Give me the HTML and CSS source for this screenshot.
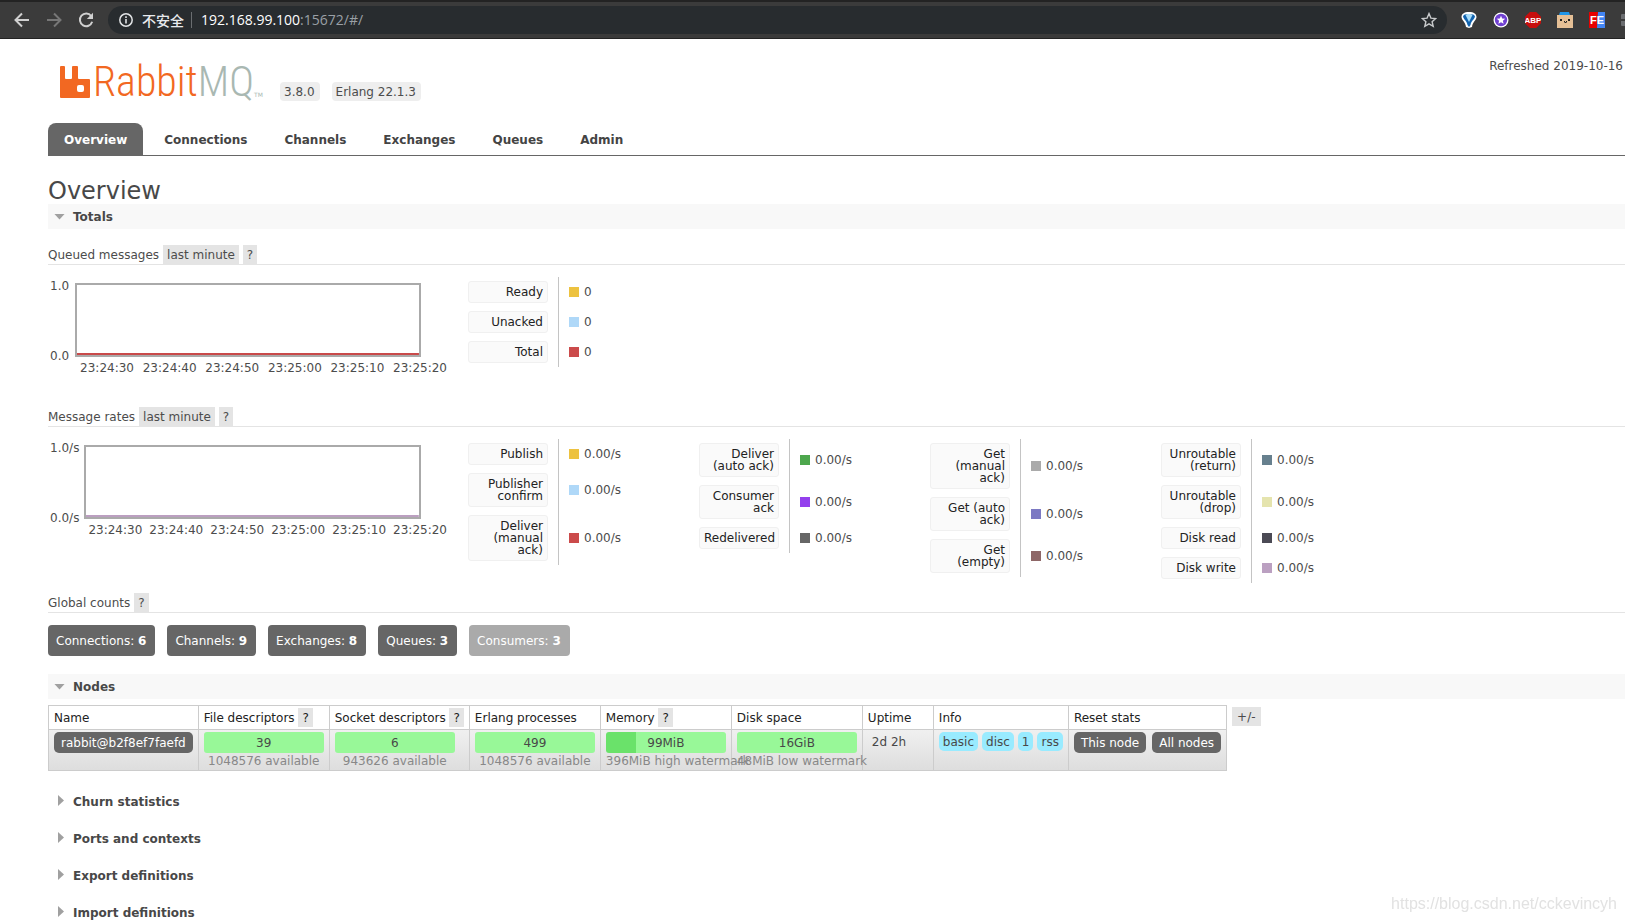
FILE: index.html
```html
<!DOCTYPE html>
<html lang="en">
<head>
<meta charset="utf-8">
<title>RabbitMQ Management</title>
<link rel="stylesheet" href="styles.css">
</head>
<body>
<header class="browser">
  <button class="nav-btn" aria-label="Back"><svg width="16" height="16" viewBox="0 0 16 16"><path d="M15 8H2M8 1.500L1.500 8L8 14.500" fill="none" stroke="#d0d0d0" stroke-width="2"/></svg></button>
  <button class="nav-btn" aria-label="Forward"><svg width="16" height="16" viewBox="0 0 16 16"><path d="M1 8H14M8 1.500L14.500 8L8 14.500" fill="none" stroke="#777" stroke-width="2"/></svg></button>
  <button class="nav-btn" aria-label="Reload"><svg width="16" height="16" viewBox="0 0 16 16"><path d="M13.200 4A6.300 6.300 0 1 0 14.200 9.800" fill="none" stroke="#d0d0d0" stroke-width="2"/><path d="M15 .8V7H8.800Z" fill="#d0d0d0"/></svg></button>
  <div class="address">
    <svg width="14" height="14" viewBox="0 0 14 14"><circle cx="7" cy="7" r="6.200" fill="none" stroke="#e2e4e6" stroke-width="1.500"/><path d="M7 6V10.500M7 3.300V4.900" stroke="#e2e4e6" stroke-width="1.600"/></svg>
    <span class="insecure">不安全</span>
    <span class="url"><b>192.168.99.100</b>:15672/#/</span>
    <button class="nav-btn star" aria-label="Bookmark"><svg width="16" height="16" viewBox="0 0 16 16"><path d="M8 1.600L9.900 6.100L14.700 6.500L11.100 9.700L12.200 14.400L8 11.900L3.800 14.400L4.900 9.700L1.300 6.500L6.100 6.100Z" fill="none" stroke="#c8cacc" stroke-width="1.400"/></svg></button>
  </div>
  <div class="extensions">
    <svg width="16" height="16" viewBox="0 0 16 16"><path d="M8 0C13 0 15.500 2 15.500 5C15.500 8 11.500 10 11 15L8 16L5 15C4.500 10 .5 8 .5 5C.5 2 3 0 8 0Z" fill="#fff"/><path d="M2 4.500C3 2 5 1.500 8 3C11 1.500 13 2 14 4.500C13 8 10 9 9.500 13L8 15L6.500 13C6 9 3 8 2 4.500Z" fill="#1264b0"/><path d="M4.500 3Q8 1 11.500 3L8 10Z" fill="#a8dcf8"/></svg>
    <svg width="16" height="16" viewBox="0 0 16 16"><circle cx="8" cy="8" r="7.500" fill="#fff"/><circle cx="8" cy="8" r="6.200" fill="#7040d0"/><path d="M8 3.800L9.200 6.600L12.200 6.800L9.900 8.800L10.600 11.800L8 10.200L5.400 11.800L6.100 8.800L3.800 6.800L6.800 6.600Z" fill="#fff"/></svg>
    <svg width="16" height="16" viewBox="0 0 16 16"><path d="M4.800 0H11.200L16 4.800V11.200L11.200 16H4.800L0 11.200V4.800Z" fill="#c70d0d"/><text x="8" y="11" text-anchor="middle" class="abp">ABP</text></svg>
    <svg width="16" height="16" viewBox="0 0 16 16"><path d="M0 3H16V16H0Z" fill="#e5bf95"/><path d="M2 3L3 0H12L13 3Z" fill="#2196e8"/><path d="M3 7H5V9H3ZM11 7H13V9H11ZM7 9H8V10H9V9H10V10L9 11H8L7 10Z" fill="#222"/></svg>
    <svg width="16" height="16" viewBox="0 0 16 16"><path d="M0 0H9L8 16H0Z" fill="#e80000"/><path d="M9 0H16V16H8Z" fill="#4285f4"/><text x="8" y="12" text-anchor="middle" class="fe">FE</text></svg>
    <svg width="16" height="16" viewBox="0 0 16 16"><path d="M0 3Q0 2 1 2H7V7H0ZM9 2H16V7H9ZM0 9H7V14H1Q0 14 0 13ZM9 9H16V14H9Z" fill="#6b6d70"/></svg>
  </div>
</header>

<div class="page">
  <div class="masthead">
    <a class="logo" href="#/" aria-label="RabbitMQ">
      <svg width="30" height="33" viewBox="0 0 30 33"><path fill-rule="evenodd" d="M1 0H4Q5 0 5 1V12Q5 13 6 13H11Q12 13 12 12V1Q12 0 13 0H17Q18 0 18 1V12Q18 13 19 13H29Q30 13 30 14V31Q30 32 29 32H1Q0 32 0 31V1Q0 0 1 0ZM19 19Q17 19 17 21V24Q17 26 19 26H22Q24 26 24 24V21Q24 19 22 19Z" fill="#f26822"/></svg>
      <span class="word">Rabbit<span class="mq">MQ</span></span><span class="tm">TM</span>
    </a>
    <span class="version">3.8.0</span>
    <span class="version">Erlang 22.1.3</span>
    <span class="refreshed">Refreshed 2019-10-16</span>
  </div>
  <nav class="tabs">
    <a class="tab on" href="#/">Overview</a>
    <a class="tab" href="#/connections">Connections</a>
    <a class="tab" href="#/channels">Channels</a>
    <a class="tab" href="#/exchanges">Exchanges</a>
    <a class="tab" href="#/queues">Queues</a>
    <a class="tab" href="#/users">Admin</a>
  </nav>

  <main>
    <h1>Overview</h1>
    <h2 class="section open">Totals</h2>

    <h3>Queued messages <button class="chip">last minute</button> <button class="chip">?</button></h3>
    <div class="stats">
      <div class="chart">
        <div class="yaxis"><span>1.0</span><span>0.0</span></div>
        <div class="plot total"></div>
        <div class="xaxis"><span>23:24:30</span><span>23:24:40</span><span>23:24:50</span><span>23:25:00</span><span>23:25:10</span><span>23:25:20</span></div>
      </div>
      <table class="legend">
        <tr><th><button>Ready</button></th><td><i class="c1"></i>0</td></tr>
        <tr><th><button>Unacked</button></th><td><i class="c2"></i>0</td></tr>
        <tr><th><button>Total</button></th><td><i class="c3"></i>0</td></tr>
      </table>
    </div>

    <h3>Message rates <button class="chip">last minute</button> <button class="chip">?</button></h3>
    <div class="stats rates">
      <div class="chart">
        <div class="yaxis"><span>1.0/s</span><span>0.0/s</span></div>
        <div class="plot disk"></div>
        <div class="xaxis"><span>23:24:30</span><span>23:24:40</span><span>23:24:50</span><span>23:25:00</span><span>23:25:10</span><span>23:25:20</span></div>
      </div>
      <table class="legend">
        <tr><th><button>Publish</button></th><td><i class="c1"></i>0.00/s</td></tr>
        <tr><th><button>Publisher confirm</button></th><td><i class="c2"></i>0.00/s</td></tr>
        <tr><th><button>Deliver (manual ack)</button></th><td><i class="c3"></i>0.00/s</td></tr>
      </table>
      <table class="legend">
        <tr><th><button>Deliver (auto ack)</button></th><td><i class="c4"></i>0.00/s</td></tr>
        <tr><th><button>Consumer ack</button></th><td><i class="c5"></i>0.00/s</td></tr>
        <tr><th><button>Redelivered</button></th><td><i class="c6"></i>0.00/s</td></tr>
      </table>
      <table class="legend">
        <tr><th><button>Get (manual ack)</button></th><td><i class="c7"></i>0.00/s</td></tr>
        <tr><th><button>Get (auto ack)</button></th><td><i class="c8"></i>0.00/s</td></tr>
        <tr><th><button>Get (empty)</button></th><td><i class="c9"></i>0.00/s</td></tr>
      </table>
      <table class="legend">
        <tr><th><button>Unroutable (return)</button></th><td><i class="c10"></i>0.00/s</td></tr>
        <tr><th><button>Unroutable (drop)</button></th><td><i class="c11"></i>0.00/s</td></tr>
        <tr><th><button>Disk read</button></th><td><i class="c12"></i>0.00/s</td></tr>
        <tr><th><button>Disk write</button></th><td><i class="c13"></i>0.00/s</td></tr>
      </table>
    </div>

    <h3>Global counts <button class="chip">?</button></h3>
    <div class="counts">
      <a href="#/connections">Connections: <b>6</b></a>
      <a href="#/channels">Channels: <b>9</b></a>
      <a href="#/exchanges">Exchanges: <b>8</b></a>
      <a href="#/queues">Queues: <b>3</b></a>
      <span>Consumers: <b>3</b></span>
    </div>

    <h2 class="section open">Nodes</h2>
    <div class="nodes">
      <table class="list">
        <thead><tr>
          <th>Name</th><th>File descriptors <button class="chip">?</button></th><th>Socket descriptors <button class="chip">?</button></th><th>Erlang processes</th><th>Memory <button class="chip">?</button></th><th>Disk space</th><th>Uptime</th><th>Info</th><th>Reset stats</th>
        </tr></thead>
        <tbody><tr>
          <td><a class="btn" href="#/nodes/rabbit">rabbit@b2f8ef7faefd</a></td>
          <td><div class="bar">39</div><div class="sub">1048576 available</div></td>
          <td><div class="bar">6</div><div class="sub">943626 available</div></td>
          <td><div class="bar">499</div><div class="sub">1048576 available</div></td>
          <td><div class="bar used">99MiB</div><div class="sub">396MiB high watermark</div></td>
          <td><div class="bar">16GiB</div><div class="sub">48MiB low watermark</div></td>
          <td class="uptime">2d 2h</td>
          <td><div class="row info"><span>basic</span><span>disc</span><span>1</span><span>rss</span></div></td>
          <td><div class="row"><button class="btn">This node</button><button class="btn">All nodes</button></div></td>
        </tr></tbody>
      </table>
      <button class="chip">+/-</button>
    </div>

    <h2 class="section closed">Churn statistics</h2>
    <h2 class="section closed">Ports and contexts</h2>
    <h2 class="section closed">Export definitions</h2>
    <h2 class="section closed">Import definitions</h2>
  </main>
</div>
<div class="watermark">https://blog.csdn.net/cckevincyh</div>
</body>
</html>
```
FILE: styles.css
```css
* { box-sizing: border-box; }
html { height: 100%; overflow: hidden; }
body {
  margin: 0;
  height: 100%;
  overflow: hidden;
  background: #fff;
  color: #4c4c4c;
  font: 12px/15px Verdana, "DejaVu Sans", sans-serif;
}
button { font: inherit; color: inherit; border: 0; margin: 0; padding: 0; background: none; cursor: pointer; }
a { color: inherit; text-decoration: none; }
svg { display: block; flex: none; }
h1, h2, h3 { margin: 0; font-weight: normal; }

.browser {
  display: flex;
  align-items: center;
  height: 39px;
  padding-left: 14px;
  background: #3b3b3b;
  border-top: 2px solid #232323;
  border-bottom: 1px solid #232323;
}
.nav-btn { margin-right: 16px; }
.address {
  flex: 1;
  display: flex;
  align-items: center;
  height: 28px;
  margin: 0 14px 0 -2px;
  padding: 0 10px 0 11px;
  border-radius: 14px;
  background: #282c2f;
  color: #9aa0a6;
  font: 14px/20px "Open Sans", "Noto Sans CJK SC", sans-serif;
}
.insecure { margin-left: 9px; padding-right: 7px; line-height: 16px; border-right: 1px solid #6a6d70; color: #e8eaed; font-family: "Noto Sans CJK SC", sans-serif; font-weight: 500; }
.url { flex: 1; margin-left: 9px; }
.url b { font-weight: normal; color: #fff; }
.star { margin: 0; }
.extensions { display: flex; gap: 16px; width: 164px; overflow: hidden; }
.abp { font: bold 8px "Liberation Sans", sans-serif; fill: #fff; }
.fe { font: bold 11px "Liberation Sans", sans-serif; fill: #fff; }

.page { padding-left: 48px; }
.masthead { display: flex; align-items: flex-start; height: 84px; padding: 18px 2px 0 12px; }
.logo { display: flex; width: 220px; padding-top: 9px; line-height: 32px; color: #f26822; }
.word { margin-left: 3px; font: 300 42px/32px "Roboto Condensed", "Liberation Sans Narrow", Lato, sans-serif; }
.mq { color: #a9b8b2; }
.tm { align-self: flex-end; font-size: 6px; line-height: 8px; color: #a9b8b2; }
.version { margin: 25px 12px 0 0; padding: 3px 5px 1px 4px; border-radius: 4px; background: #eee; }
.refreshed { margin-left: auto; padding-top: 2px; }
.tabs { display: flex; gap: 5px; border-bottom: 1px solid #666; }
.tab { padding: 10px 16px 7px; line-height: 15px; font-weight: bold; color: #444; }
.tab.on { background: #666; color: #fff; border-radius: 8px 8px 0 0; }

h1 { padding-top: 21px; font-size: 24px; line-height: 28px; height: 48px; color: #484848; }
.section { display: flex; align-items: center; height: 25px; padding-top: 2px; font-size: 12px; font-weight: bold; color: #484848; }
.section::before { content: ""; background: #a0a0a0; }
.open { background: #f8f8f8; }
.open::before { width: 11px; height: 6px; margin: 0 8px 2px 6px; clip-path: polygon(0 0, 100% 0, 50% 100%); }
.closed { margin-bottom: 12px; }
.closed::before { width: 6px; height: 11px; margin: 0 9px 4px 10px; clip-path: polygon(0 0, 100% 50%, 0 100%); }
.chip { padding: 3px 4px 1px; background: #e4e4e4; line-height: 15px; }
h3 { display: flex; align-items: flex-start; gap: 4px; height: 20px; font-size: 12px; line-height: 21px; border-bottom: 1px solid #e4e4e4; }
.open + h3 { margin-top: 16px; }

.stats { display: flex; height: 142px; padding: 12px 0 0 2px; }
.rates { height: 166px; }
.chart { display: grid; grid-template-columns: auto 1fr; width: 371px; height: 98px; padding: 6px 0 0; margin-right: 47px; column-gap: 6px; }
.rates .chart { column-gap: 5px; }
.yaxis { display: flex; flex-direction: column; justify-content: space-between; height: 84px; margin: -4px 0 -6px; line-height: 14px; }
.plot { height: 74px; border: 2px solid #aaa; }
.total { background: linear-gradient(#c94a4a, #c94a4a) bottom / 100% 2px no-repeat; }
.disk { background: linear-gradient(#bb9fc0, #bb9fc0) bottom / 100% 2px no-repeat; }
.xaxis { grid-column: 2; display: flex; justify-content: space-between; margin: 4px -26px 0 5px; }
.rates .xaxis { margin-left: 4px; }

.legend { align-self: flex-start; width: 231px; border-collapse: collapse; }
.legend th { width: 90px; padding: 4px 10px 4px 0; border-right: 1px solid #c4c4c4; font-weight: normal; }
.legend button { display: block; width: 80px; padding: 4px; border: 1px solid #f0f0f0; border-radius: 3px; background: #fafafa; color: #222; line-height: 12px; text-align: right; }
.legend td { padding: 0 0 0 10px; }
.legend i { display: inline-block; width: 10px; height: 10px; margin-right: 5px; vertical-align: -1px; }
.c1 { background: #edc240; } .c2 { background: #afd8f8; } .c3 { background: #cb4b4b; }
.c4 { background: #4da74d; } .c5 { background: #9440ed; } .c6 { background: #666; }
.c7 { background: #aaa; } .c8 { background: #7c79c3; } .c9 { background: #8e6767; }
.c10 { background: #67808e; } .c11 { background: #e5e4ae; } .c12 { background: #4b4a55; } .c13 { background: #bba0c1; }

.counts { display: flex; gap: 12px; margin: 12px 0 18px; }
.counts a, .counts span { padding: 9px 9px 7px 8px; border-radius: 4px; background: #666; color: #fff; }
.counts span { background: #aaa; }

.nodes { display: flex; align-items: flex-start; gap: 5px; margin: 6px 0 18px; }
.nodes > .chip { margin-top: 2px; padding: 3px 5px 1px; }
.list { border-collapse: collapse; color: #484848; }
.list th, .list td { padding: 2px 5px; border: 1px solid #ccc; text-align: left; vertical-align: top; white-space: nowrap; }
.list th { padding: 3px 5px 1px; font-weight: normal; line-height: 19px; color: #222; }
.list th .chip { margin-top: -1px; }
.list tbody tr { background: linear-gradient(#f0f0f0, #ddd); }
.btn { display: block; padding: 4px 7px 2px; border-radius: 5px; background: #666; color: #fff; }
.bar { width: 120px; padding: 4px 0 2px; border-radius: 3px; background: #98f898; text-align: center; }
.used { background: linear-gradient(#6ae26a, #6ae26a) 0 / 25% 100% no-repeat #98f898; }
.sub { width: 120px; height: 15px; line-height: 17px; color: #888; text-align: center; }
.row { display: flex; align-items: flex-start; gap: 6px; }
.info { gap: 4px; }
.info span { padding: 3px 4px 1px; border-radius: 5px; background: #99ebff; }
.list .uptime { min-width: 71px; padding: 5px 9px 0; }
.watermark { position: fixed; right: 8px; bottom: 9px; color: #e2e2e2; font: 16px/18px "Liberation Sans", sans-serif; }
```
